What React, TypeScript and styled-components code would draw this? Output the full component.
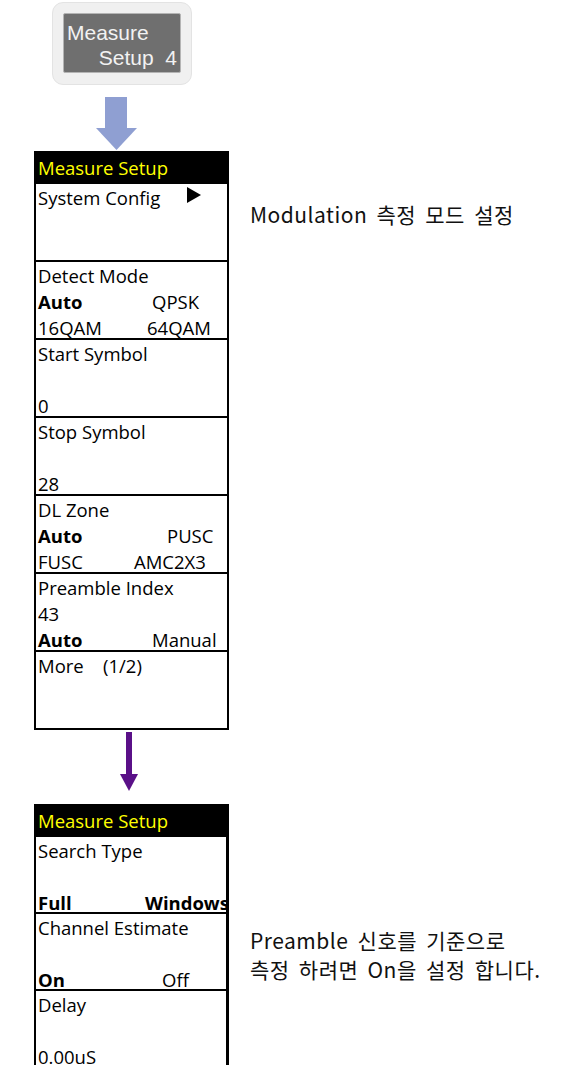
import styled, { createGlobalStyle } from 'styled-components';

interface Cell {
  text: string;
  bold?: boolean;
}

interface Line {
  left?: Cell;
  right?: Cell;
  at?: number /* x of the second column, from the text start */;
}

interface MenuRow {
  lines: Line[];
  arrow?: boolean;
}

const GlobalStyle = createGlobalStyle`
  html, body {
    margin: 0;
    padding: 0;
    background: #ffffff;
  }
  body {
    width: 562px;
    height: 1065px;
    overflow: hidden;
    font-family: "Open Sans", "Noto Sans", sans-serif;
  }
`;

const Page = styled.div`
  display: flex;
  flex-direction: column;
  align-items: flex-start;
`;

/* 상단 하드키 버튼 */
const KeyFrame = styled.div`
  margin: 2px 0 0 52px;
  width: 140px;
  height: 83px;
  box-sizing: border-box;
  padding: 10px 0 0 10px;
  background: #f0f0f0;
  border: 1px solid #e3e3e3;
  border-radius: 11px;
`;

const KeyFace = styled.div`
  width: 118px;
  height: 60px;
  box-sizing: border-box;
  padding: 6px 3px 0 3px;
  background: #6f6f6f;
  border: 1px solid #b4b4b4;
  border-radius: 2px;
  font-family: "Liberation Sans", Arial, sans-serif;
  font-size: 21px;
  line-height: 25px;
  color: #f2f2f2;
`;

const KeyLine = styled.div<{ $right?: boolean }>`
  text-align: ${(p) => (p.$right ? 'right' : 'left')};
  white-space: pre;
`;

const ArrowBox = styled.div<{ $left: number; $top: number }>`
  display: flex;
  margin: ${(p) => p.$top}px 0 0 ${(p) => p.$left}px;
`;

const Section = styled.div<{ $top: number }>`
  display: flex;
  align-items: flex-start;
  margin-top: ${(p) => p.$top}px;
`;

const Panel = styled.div<{ $edge: number }>`
  margin-left: 34px;
  width: 195px;
  box-sizing: border-box;
  border-left: 2px solid #000;
  border-right: ${(p) => p.$edge}px solid #000;
  overflow: hidden;
`;

const Header = styled.div<{ $height: number }>`
  height: ${(p) => p.$height}px;
  line-height: ${(p) => p.$height}px;
  padding-left: 2px;
  background: #000;
  color: #ffff00;
  font-size: 18.5px;
`;

const Row = styled.div<{ $height: number; $last?: boolean }>`
  position: relative;
  height: ${(p) => p.$height}px;
  box-sizing: border-box;
  padding: 1px 0 0 2px;
  border-bottom: ${(p) => (p.$last ? 'none' : '2px solid #000')};
  font-size: 18.5px;
  line-height: 26px;
  color: #000;
`;

const Pair = styled.div<{ $at: number }>`
  display: grid;
  grid-template-columns: ${(p) => p.$at}px max-content;
  height: 26px;
  white-space: nowrap;
`;

const Word = styled.span<{ $bold?: boolean }>`
  font-weight: ${(p) => (p.$bold ? 700 : 400)};
`;

/* System Config 옆의 서브메뉴 표시 */
const SubMark = styled.svg`
  position: absolute;
  left: 151px;
  top: 3px;
`;

const Note = styled.div<{ $top: number }>`
  margin: ${(p) => p.$top}px 0 0 21px;
  font-family: "Noto Sans CJK KR", "Noto Sans", sans-serif;
  font-size: 21px;
  letter-spacing: 0.5px;
  word-spacing: 4px;
  line-height: 29px;
  color: #111;
  white-space: nowrap;
`;

const NoteLine = styled.div`
  height: 29px;
`;

const firstMenu: MenuRow[] = [
  { lines: [{ left: { text: 'System Config' } }], arrow: true },
  {
    lines: [
      { left: { text: 'Detect Mode' } },
      { left: { text: 'Auto', bold: true }, right: { text: 'QPSK' }, at: 114 },
      { left: { text: '16QAM' }, right: { text: '64QAM' }, at: 109 },
    ],
  },
  { lines: [{ left: { text: 'Start Symbol' } }, {}, { left: { text: '0' } }] },
  { lines: [{ left: { text: 'Stop Symbol' } }, {}, { left: { text: '28' } }] },
  {
    lines: [
      { left: { text: 'DL Zone' } },
      { left: { text: 'Auto', bold: true }, right: { text: 'PUSC' }, at: 129 },
      { left: { text: 'FUSC' }, right: { text: 'AMC2X3' }, at: 96 },
    ],
  },
  {
    lines: [
      { left: { text: 'Preamble Index' } },
      { left: { text: '43' } },
      { left: { text: 'Auto', bold: true }, right: { text: 'Manual' }, at: 114 },
    ],
  },
  { lines: [{ left: { text: 'More' }, right: { text: '(1/2)' }, at: 65 }] },
];

const secondMenu: MenuRow[] = [
  {
    lines: [
      { left: { text: 'Search Type' } },
      {},
      { left: { text: 'Full', bold: true }, right: { text: 'Windows', bold: true }, at: 107 },
    ],
  },
  {
    lines: [
      { left: { text: 'Channel Estimate' } },
      {},
      { left: { text: 'On', bold: true }, right: { text: 'Off' }, at: 124 },
    ],
  },
  { lines: [{ left: { text: 'Delay' } }, {}, { left: { text: '0.00uS' } }] },
];

function Menu({
  rows,
  rowHeight,
  edge,
  open,
}: {
  rows: MenuRow[];
  rowHeight: number;
  edge: number;
  open?: boolean;
}) {
  return (
    <Panel $edge={edge}>
      <Header $height={33}>Measure Setup</Header>
      {rows.map((row, index) => (
        <Row key={index} $height={rowHeight} $last={open && index === rows.length - 1}>
          {row.lines.map((line, i) => (
            <Pair key={i} $at={line.at ?? 0}>
              <Word $bold={line.left?.bold}>{line.left?.text ?? ''}</Word>
              {line.right && <Word $bold={line.right.bold}>{line.right.text}</Word>}
            </Pair>
          ))}
          {row.arrow && (
            <SubMark width="14" height="16" viewBox="0 0 14 16">
              <polygon points="0,0 14,8 0,16" fill="#000" />
            </SubMark>
          )}
        </Row>
      ))}
    </Panel>
  );
}

function App() {
  return (
    <>
      <GlobalStyle />
      <Page>
        <KeyFrame>
          <KeyFace>
            <KeyLine>Measure</KeyLine>
            <KeyLine $right>{'Setup  4'}</KeyLine>
          </KeyFace>
        </KeyFrame>

        <ArrowBox $left={96} $top={12}>
          <svg width="41" height="53" viewBox="0 0 41 53">
            <rect x="9" y="0" width="22" height="32" fill="#8f9fd2" />
            <polygon points="0,31 41,31 20.5,53" fill="#8f9fd2" />
          </svg>
        </ArrowBox>

        <Section $top={1}>
          <Menu rows={firstMenu} rowHeight={78} edge={2} />
          <Note $top={49}>
            <NoteLine>Modulation 측정 모드 설정</NoteLine>
          </Note>
        </Section>

        <ArrowBox $left={120} $top={2}>
          <svg width="18" height="59" viewBox="0 0 18 59">
            <rect x="6" y="0" width="6" height="43" fill="#5a1088" />
            <polygon points="0,42 18,42 9,59" fill="#5a1088" />
          </svg>
        </ArrowBox>

        <Section $top={13}>
          <Menu rows={secondMenu} rowHeight={77} edge={3} open />
          <Note $top={122}>
            <NoteLine>Preamble 신호를 기준으로</NoteLine>
            <NoteLine>측정 하려면 On을 설정 합니다.</NoteLine>
          </Note>
        </Section>
      </Page>
    </>
  );
}

export default App;
